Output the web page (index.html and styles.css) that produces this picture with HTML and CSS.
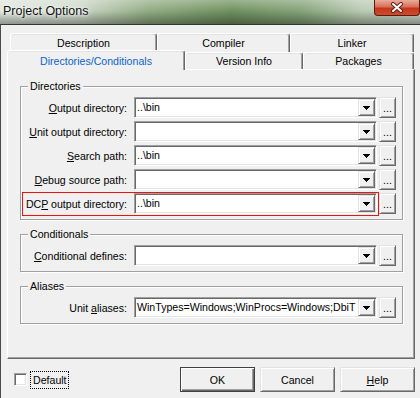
FILE: index.html
```html
<!DOCTYPE html>
<html lang="en">
<head>
  <meta charset="UTF-8" />
  <title>Project Options</title>
  <link rel="stylesheet" href="styles.css">
</head>
<body>
  <div class="window">
    <div class="titlebar">
      <span class="title">Project Options</span>
      <span class="close">
        <svg width="14" height="11" viewBox="0 0 14 11">
          <path d="M3 2 L11 9 M11 2 L3 9" stroke="#5c2418" stroke-width="4" stroke-linecap="round" />
          <path d="M3 2 L11 9 M11 2 L3 9" stroke="#fff" stroke-width="2" stroke-linecap="round" />
        </svg>
      </span>
    </div>

    <div class="client">
      <div class="tabs">
        <div class="tab-row back">
          <div class="tab w-desc">Description</div>
          <div class="tab w-comp">Compiler</div>
          <div class="tab w-link">Linker</div>
        </div>
        <div class="tab-row front">
          <div class="tab active w-dirs">Directories/Conditionals</div>
          <div class="tab w-ver">Version Info</div>
          <div class="tab w-pkg">Packages</div>
        </div>
      </div>

      <div class="panel">
        <div class="group">
          <div class="legend">Directories</div>
          <div class="rows">
            <div class="row">
              <label class="label"><u>O</u>utput directory:</label>
              <div class="combo"><span class="value">..\bin</span><span class="drop"><svg width="7" height="4" viewBox="0 0 7 4" shape-rendering="crispEdges"><path d="M0 0h7v1h-1v1h-1v1h-1v1h-1v-1h-1v-1h-1v-1h-1z" fill="#000"/></svg></span></div>
              <button class="more">...</button>
            </div>
            <div class="row">
              <label class="label"><u>U</u>nit output directory:</label>
              <div class="combo"><span class="value"></span><span class="drop"><svg width="7" height="4" viewBox="0 0 7 4" shape-rendering="crispEdges"><path d="M0 0h7v1h-1v1h-1v1h-1v1h-1v-1h-1v-1h-1v-1h-1z" fill="#000"/></svg></span></div>
              <button class="more">...</button>
            </div>
            <div class="row">
              <label class="label"><u>S</u>earch path:</label>
              <div class="combo"><span class="value">..\bin</span><span class="drop"><svg width="7" height="4" viewBox="0 0 7 4" shape-rendering="crispEdges"><path d="M0 0h7v1h-1v1h-1v1h-1v1h-1v-1h-1v-1h-1v-1h-1z" fill="#000"/></svg></span></div>
              <button class="more">...</button>
            </div>
            <div class="row">
              <label class="label"><u>D</u>ebug source path:</label>
              <div class="combo"><span class="value"></span><span class="drop"><svg width="7" height="4" viewBox="0 0 7 4" shape-rendering="crispEdges"><path d="M0 0h7v1h-1v1h-1v1h-1v1h-1v-1h-1v-1h-1v-1h-1z" fill="#000"/></svg></span></div>
              <button class="more">...</button>
            </div>
            <div class="row marked">
              <label class="label">DC<u>P</u> output directory:</label>
              <div class="combo"><span class="value">..\bin</span><span class="drop"><svg width="7" height="4" viewBox="0 0 7 4" shape-rendering="crispEdges"><path d="M0 0h7v1h-1v1h-1v1h-1v1h-1v-1h-1v-1h-1v-1h-1z" fill="#000"/></svg></span></div>
              <button class="more">...</button>
            </div>
          </div>
        </div>

        <div class="group">
          <div class="legend">Conditionals</div>
          <div class="rows">
            <div class="row">
              <label class="label"><u>C</u>onditional defines:</label>
              <div class="combo"><span class="value"></span><span class="drop"><svg width="7" height="4" viewBox="0 0 7 4" shape-rendering="crispEdges"><path d="M0 0h7v1h-1v1h-1v1h-1v1h-1v-1h-1v-1h-1v-1h-1z" fill="#000"/></svg></span></div>
              <button class="more">...</button>
            </div>
          </div>
        </div>

        <div class="group">
          <div class="legend">Aliases</div>
          <div class="rows">
            <div class="row">
              <label class="label">Unit <u>a</u>liases:</label>
              <div class="combo"><span class="value">WinTypes=Windows;WinProcs=Windows;DbiT</span><span class="drop"><svg width="7" height="4" viewBox="0 0 7 4" shape-rendering="crispEdges"><path d="M0 0h7v1h-1v1h-1v1h-1v1h-1v-1h-1v-1h-1v-1h-1z" fill="#000"/></svg></span></div>
              <button class="more">...</button>
            </div>
          </div>
        </div>
      </div>

      <div class="footer">
        <label class="check"><span class="box"></span><span class="focus">Default</span></label>
        <div class="buttons">
          <button class="btn default">OK</button>
          <button class="btn">Cancel</button>
          <button class="btn"><u>H</u>elp</button>
        </div>
      </div>
    </div>
  </div>
</body>
</html>
```

FILE: styles.css
```css
body {
  margin: 0;
  background: #f0f0f0;
  font-family: "Liberation Sans", Arial, sans-serif;
  font-size: 10.6px;
  color: #000;
}
.window {
  width: 420px;
  height: 398px;
  overflow: hidden;
  background: #f0f0f0;
}

/* title bar */
.titlebar {
  height: 24px;
  display: flex;
  justify-content: space-between;
  align-items: flex-start;
  background:
    linear-gradient(to bottom, rgba(255,255,255,0.3) 0%, rgba(255,255,255,0) 45%, rgba(0,0,0,0.35) 100%),
    linear-gradient(to right, #dfe6dc 0%, #cfdacb 18%, #93ad84 35%, #6f9160 55%, #86a479 72%, #b9cbb3 86%, #ccd7c9 100%);
}
.title {
  font-size: 12.5px;
  line-height: 22px;
  padding-left: 3px;
  color: #111;
  text-shadow: 0 0 6px #fff, 0 0 3px #fff;
}
.close {
  width: 46px;
  height: 16px;
  box-sizing: border-box;
  border: 1px solid #5a1a10;
  border-top: none;
  border-radius: 0 0 4px 4px;
  background: linear-gradient(to bottom, #e9ab9c 0%, #d97058 45%, #c2371c 55%, #d24a2c 100%);
  display: flex;
  align-items: center;
  justify-content: center;
}

/* client area */
.client {
  height: 373px;
  border-top: 1px solid #2e3a2c;
  border-left: 1px solid #4a4a4a;
  padding: 0 5px 0 6px;
}

/* tabs */
.tabs {
  padding-top: 8px;
}
.tab-row {
  display: flex;
}
.tab-row.back {
  margin-left: 3px;
  height: 19px;
}
.tab-row.front {
  height: 17px;
  align-items: flex-end;
}
.tab {
  box-sizing: border-box;
  height: 100%;
  display: flex;
  align-items: center;
  justify-content: center;
  background: #f0f0f0;
  border-top: 1px solid #fff;
  border-left: 1px solid #fff;
  border-right: 1px solid #696969;
  box-shadow: inset -1px 0 #a0a0a0, inset 0 1px #e3e3e3;
  border-radius: 3px 3px 0 0;
}
.tab.active {
  height: 20px;
  margin-bottom: -1px;
  position: relative;
  z-index: 1;
  color: #0a64c8;
}
.w-desc { width: 147px; }
.w-comp { width: 133px; }
.w-link { width: 124px; }
.w-dirs { width: 178px; }
.w-ver { width: 118px; }
.w-pkg { width: 111px; }

/* tab page */
.panel {
  height: 290px;
  box-sizing: border-box;
  border-top: 1px solid #fff;
  border-left: 1px solid #fff;
  border-right: 1px solid #696969;
  border-bottom: 1px solid #696969;
  box-shadow: inset -1px -1px #a0a0a0;
  padding: 16px 11px 0 12px;
}
.group {
  border: 1px solid #a0a0a0;
  box-shadow: inset 1px 1px #fff, 1px 1px #fff;
  padding-bottom: 5px;
}
.group + .group {
  margin-top: 14px;
}
.legend {
  margin: -7px 0 0 7px;
  padding: 0 2px;
  width: max-content;
  line-height: 13px;
  background: #f0f0f0;
}
.rows {
  display: flex;
  flex-direction: column;
  gap: 3px;
  margin-top: 4px;
  padding-right: 6px;
}
.row {
  display: flex;
  align-items: center;
  height: 21px;
  position: relative;
}
.row.marked::after {
  content: "";
  position: absolute;
  left: 1px;
  top: -1px;
  width: 357px;
  height: 24px;
  box-sizing: border-box;
  border: 1px solid #f01010;
  pointer-events: none;
}
.label {
  flex: 1;
  text-align: right;
  padding-right: 7px;
  white-space: nowrap;
}
.combo {
  width: 243px;
  height: 21px;
  box-sizing: border-box;
  display: flex;
  padding: 1px;
  background: #fff;
  border: 1px solid;
  border-color: #a0a0a0 #fff #fff #a0a0a0;
  box-shadow: inset 1px 1px #696969, inset -1px -1px #e3e3e3;
}
.value {
  flex: 1;
  min-width: 0;
  padding-left: 1px;
  line-height: 17px;
  overflow: hidden;
  white-space: nowrap;
}
.drop {
  flex: none;
  width: 17px;
  height: 17px;
  box-sizing: border-box;
  display: flex;
  align-items: center;
  justify-content: center;
  background: #f0f0f0;
  border: 1px solid;
  border-color: #e3e3e3 #696969 #696969 #e3e3e3;
  box-shadow: inset 1px 1px #fff, inset -1px -1px #a0a0a0;
}
.more,
.btn {
  font: inherit;
  color: #000;
  padding: 0;
  background: #f0f0f0;
  border: 1px solid;
  border-color: #e3e3e3 #696969 #696969 #e3e3e3;
  box-shadow: inset 1px 1px #fff, inset -1px -1px #a0a0a0;
}
.more {
  width: 17px;
  height: 21px;
  margin-left: 2px;
  line-height: 21px;
}

/* bottom buttons */
.footer {
  display: flex;
  align-items: center;
  padding: 8px 0 0 7px;
}
.check {
  display: flex;
  align-items: center;
  gap: 4px;
}
.box {
  width: 13px;
  height: 13px;
  box-sizing: border-box;
  background: #fff;
  border: 1px solid;
  border-color: #a0a0a0 #fff #fff #a0a0a0;
  box-shadow: inset 1px 1px #696969, inset -1px -1px #e3e3e3;
}
.focus {
  outline: 1px dotted #000;
  padding: 1px 1px 1px 2px;
  line-height: 14px;
}
.buttons {
  margin-left: auto;
  display: flex;
  gap: 5px;
}
.btn {
  width: 75px;
  height: 25px;
}
.btn.default {
  border-color: #404040;
  box-shadow: inset 1px 1px #fff, inset -1px -1px #696969, inset -2px -2px #a0a0a0;
}
```
